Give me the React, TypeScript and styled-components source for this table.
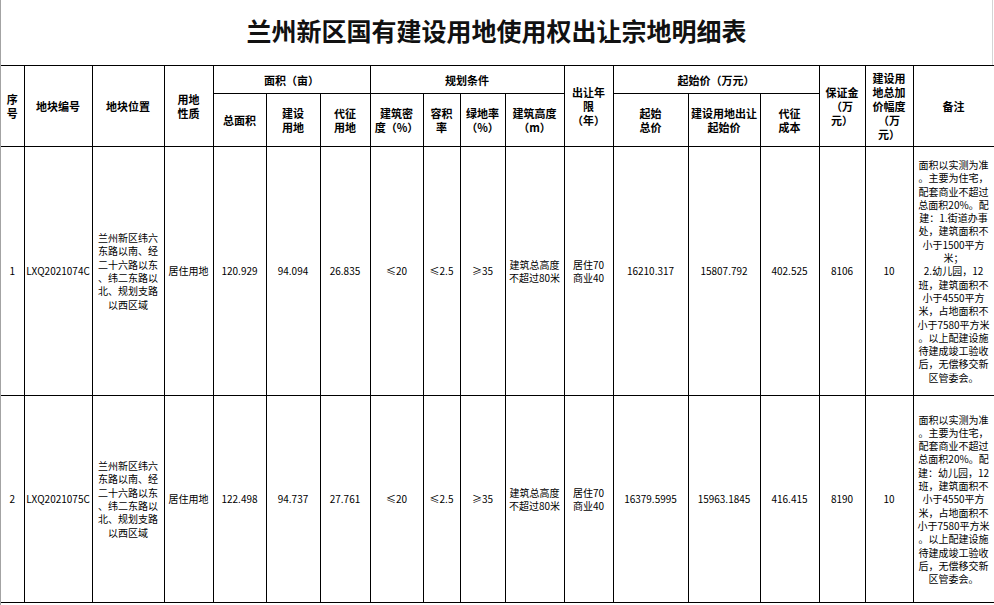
import React from "react";
import styled, { createGlobalStyle } from "styled-components";

const Global = createGlobalStyle`
  html, body { margin: 0; padding: 0; background: #fff; }
  body { font-family: "Noto Sans CJK SC", "Noto Sans", sans-serif; color: #000; }
`;

const Sheet = styled.div`
  width: 994px;
  height: 605px;
  box-sizing: border-box;
  border-left: 1px solid #a3a3a3;
  overflow: hidden;
  display: flex;
  flex-direction: column;
`;

const TitleBar = styled.div`
  height: 66px;
  width: 992px;
  box-sizing: border-box;
  border-right: 1px solid #d4d4d4;
  display: flex;
  justify-content: center;
  padding-top: 17px;
`;

const Title = styled.h1`
  margin: 0;
  font-family: "Noto Sans CJK SC", sans-serif;
  font-size: 25px;
  line-height: 26px;
  font-weight: 700;
  letter-spacing: 0;
  color: #111;
`;

const Table = styled.table`
  border-collapse: collapse;
  table-layout: fixed;
  width: 993px;
  margin-top: -1px;
`;

const Head = styled.th<{ $first?: boolean }>`
  border: 1px solid #000;
  ${(p) => (p.$first ? "border-left: none;" : "")}
  padding: 0 2px;
  font-family: "Noto Sans CJK SC", sans-serif;
  font-size: 11px;
  line-height: 14px;
  font-weight: 700;
  text-align: center;
  vertical-align: middle;
  white-space: nowrap;
`;

const HeadRow = styled.tr<{ $h: number }>`
  height: ${(p) => p.$h}px;
`;

const BodyRow = styled.tr<{ $h: number }>`
  height: ${(p) => p.$h}px;
`;

const Cell = styled.td<{ $first?: boolean }>`
  border: 1px solid #000;
  ${(p) => (p.$first ? "border-left: none;" : "")}
  padding: 0;
  font-family: "Noto Sans CJK SC", sans-serif;
  font-size: 10px;
  line-height: 13.3px;
  text-align: center;
  vertical-align: middle;
  white-space: nowrap;
  overflow: hidden;
`;

const Lines = styled.div`
  display: flex;
  flex-direction: column;
  align-items: center;
`;

const Line = styled.span`
  display: block;
  white-space: nowrap;
`;

const widths = [23, 68, 72, 49, 53, 54, 50, 53, 37, 45, 59, 49, 75, 72, 59, 46, 48, 81];

type Row = {
  no: string;
  code: string;
  loc: string[];
  use: string;
  total: string;
  build: string;
  levy: string;
  density: string;
  far: string;
  green: string;
  height: string[];
  term: string[];
  start: string;
  landStart: string;
  levyCost: string;
  deposit: string;
  step: string;
  notes: string[];
  h: number;
};

const loc = ["兰州新区纬六", "东路以南、经", "二十六路以东", "、纬二东路以", "北、规划支路", "以西区域"];

const rows: Row[] = [
  {
    no: "1",
    code: "LXQ2021074C",
    loc,
    use: "居住用地",
    total: "120.929",
    build: "94.094",
    levy: "26.835",
    density: "≤20",
    far: "≤2.5",
    green: "≥35",
    height: ["建筑总高度", "不超过80米"],
    term: ["居住70", "商业40"],
    start: "16210.317",
    landStart: "15807.792",
    levyCost: "402.525",
    deposit: "8106",
    step: "10",
    notes: [
      "面积以实测为准",
      "。主要为住宅，",
      "配套商业不超过",
      "总面积20%。配",
      "建：1.街道办事",
      "处，建筑面积不",
      "小于1500平方",
      "米；",
      "2.幼儿园，12",
      "班，建筑面积不",
      "小于4550平方",
      "米，占地面积不",
      "小于7580平方米",
      "。以上配建设施",
      "待建成竣工验收",
      "后，无偿移交新",
      "区管委会。",
    ],
    h: 249,
  },
  {
    no: "2",
    code: "LXQ2021075C",
    loc,
    use: "居住用地",
    total: "122.498",
    build: "94.737",
    levy: "27.761",
    density: "≤20",
    far: "≤2.5",
    green: "≥35",
    height: ["建筑总高度", "不超过80米"],
    term: ["居住70", "商业40"],
    start: "16379.5995",
    landStart: "15963.1845",
    levyCost: "416.415",
    deposit: "8190",
    step: "10",
    notes: [
      "面积以实测为准",
      "。主要为住宅，",
      "配套商业不超过",
      "总面积20%。配",
      "建：幼儿园，12",
      "班，建筑面积不",
      "小于4550平方",
      "米，占地面积不",
      "小于7580平方米",
      "。以上配建设施",
      "待建成竣工验收",
      "后，无偿移交新",
      "区管委会。",
    ],
    h: 207,
  },
];

const Multi: React.FC<{ lines: string[] }> = ({ lines }) => (
  <Lines>
    {lines.map((l, i) => (
      <Line key={i}>{l}</Line>
    ))}
  </Lines>
);

export default function App() {
  return (
    <>
      <Global />
      <Sheet>
        <TitleBar>
          <Title>兰州新区国有建设用地使用权出让宗地明细表</Title>
        </TitleBar>
        <Table>
          <colgroup>
            {widths.map((w, i) => (
              <col key={i} style={{ width: w }} />
            ))}
          </colgroup>
          <thead>
            <HeadRow $h={28}>
              <Head $first rowSpan={2}>
                <Multi lines={["序", "号"]} />
              </Head>
              <Head rowSpan={2}>地块编号</Head>
              <Head rowSpan={2}>地块位置</Head>
              <Head rowSpan={2}>
                <Multi lines={["用地", "性质"]} />
              </Head>
              <Head colSpan={3}>面积（亩）</Head>
              <Head colSpan={4}>规划条件</Head>
              <Head rowSpan={2}>
                <Multi lines={["出让年", "限", "（年）"]} />
              </Head>
              <Head colSpan={3}>起始价（万元）</Head>
              <Head rowSpan={2}>
                <Multi lines={["保证金", "（万", "元）"]} />
              </Head>
              <Head rowSpan={2}>
                <Multi lines={["建设用", "地总加", "价幅度", "（万", "元）"]} />
              </Head>
              <Head rowSpan={2}>备注</Head>
            </HeadRow>
            <HeadRow $h={53}>
              <Head>总面积</Head>
              <Head>
                <Multi lines={["建设", "用地"]} />
              </Head>
              <Head>
                <Multi lines={["代征", "用地"]} />
              </Head>
              <Head>
                <Multi lines={["建筑密", "度（%）"]} />
              </Head>
              <Head>
                <Multi lines={["容积", "率"]} />
              </Head>
              <Head>
                <Multi lines={["绿地率", "（%）"]} />
              </Head>
              <Head>
                <Multi lines={["建筑高度", "（m）"]} />
              </Head>
              <Head>
                <Multi lines={["起始", "总价"]} />
              </Head>
              <Head>
                <Multi lines={["建设用地出让", "起始价"]} />
              </Head>
              <Head>
                <Multi lines={["代征", "成本"]} />
              </Head>
            </HeadRow>
          </thead>
          <tbody>
            {rows.map((r) => (
              <BodyRow key={r.no} $h={r.h}>
                <Cell $first>{r.no}</Cell>
                <Cell>{r.code}</Cell>
                <Cell>
                  <Multi lines={r.loc} />
                </Cell>
                <Cell>{r.use}</Cell>
                <Cell>{r.total}</Cell>
                <Cell>{r.build}</Cell>
                <Cell>{r.levy}</Cell>
                <Cell>{r.density}</Cell>
                <Cell>{r.far}</Cell>
                <Cell>{r.green}</Cell>
                <Cell>
                  <Multi lines={r.height} />
                </Cell>
                <Cell>
                  <Multi lines={r.term} />
                </Cell>
                <Cell>{r.start}</Cell>
                <Cell>{r.landStart}</Cell>
                <Cell>{r.levyCost}</Cell>
                <Cell>{r.deposit}</Cell>
                <Cell>{r.step}</Cell>
                <Cell>
                  <Multi lines={r.notes} />
                </Cell>
              </BodyRow>
            ))}
          </tbody>
        </Table>
      </Sheet>
    </>
  );
}
